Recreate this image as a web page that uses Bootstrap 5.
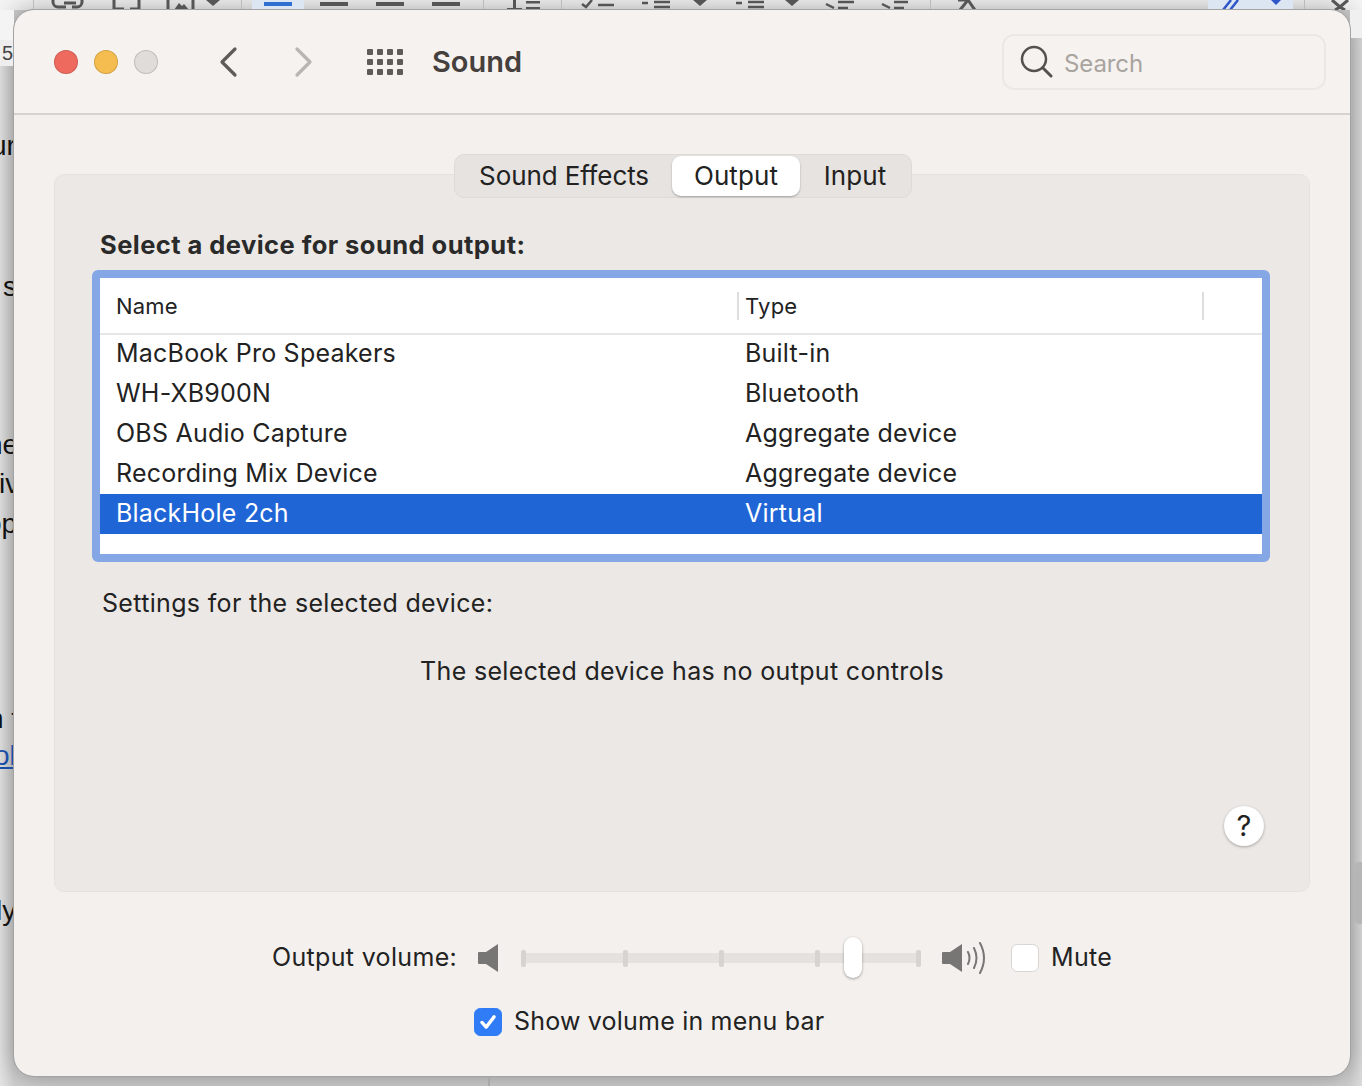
<!doctype html>
<html lang="en"><head><meta charset="utf-8"><title>Sound</title>
<link href="https://cdn.jsdelivr.net/npm/bootstrap@5.3.0/dist/css/bootstrap.min.css" rel="stylesheet">
<style>
html,body{height:1086px;overflow:hidden}
body{width:1362px;position:relative;font-family:Inter,"Liberation Sans",sans-serif;font-size:25px;letter-spacing:.33px;color:#222;background:linear-gradient(90deg,#e4e4e4 0,#cfcfcf 14px,#cfcfcf 1350px,#dcdcdc 1362px)}
.bg-top{height:10px;display:block;background:#f4f4f4}
.bg-frag{position:absolute;font-family:"Liberation Sans",sans-serif;font-size:28px;color:#111;line-height:1;white-space:nowrap;letter-spacing:0}
.bg-num{left:0;top:40px;width:14px;height:26px;background:#eee;font-size:20px;padding:3px 0 0 2px;color:#444}
.bg-sep{position:absolute;left:0;top:10px;width:14px;height:30px;background:#f4f4f4}
.bg-sep-r{position:absolute;right:0;top:10px;width:12px;height:28px;background:#f0f0f0}
.bg-thumb{position:absolute;left:1354px;top:862px;width:8px;height:62px;background:#b6b6b6;border-radius:5px 0 0 5px;z-index:1}
.bg-line{position:absolute;left:488px;top:1076px;width:2px;height:10px;background:#a8a8a8;z-index:1}
.mac-win{position:relative;width:1336px;height:1066px;background:#f3f0ed;border-radius:20px;overflow:hidden;outline:1px solid #a3a3a3}
.win-wrap{width:1336px;height:1066px;margin-left:14px;border-radius:20px;box-shadow:0 0 26px rgba(0,0,0,.34)}
.title-bar{height:105px;background:#f6f2ef;border-bottom:2px solid #d6d3cf;padding:0 24px 0 40px}
.light{width:24px;height:24px;border-radius:50%;border:1px solid rgba(0,0,0,.14)}
.l-red{background:#ee6a5f}.l-yel{background:#f5bd4f}.l-off{background:#dfdcd9}
.lights{gap:16px;margin-right:60px}
.nav-ico{width:22px;height:34px;display:block}
.grid-ico{margin-left:53px}
.nav-next{margin-left:52px}
.title-txt{font-size:29px;font-weight:600;color:#45403d;margin-left:29px;letter-spacing:0}
.search-box{width:324px;height:56px;border:2px solid #ece8e4;border-radius:12px;padding-left:15px;gap:11px;color:#a8a4a0;font-size:24px;letter-spacing:-.1px}
.search-box span{padding-top:4px}
.tab-row{padding-top:39px;padding-left:2px;position:relative;z-index:2}
.seg{height:44px;background:#e6e3e0;border:1px solid #dedbd7;border-radius:10px;padding:1px;width:458px}
.seg-item{height:40px;font-size:26px;line-height:39px;text-align:center;color:#222;border-radius:9px;letter-spacing:.1px}
.seg-a{width:216px;letter-spacing:-.12px}.seg-b{width:128px;background:#fff;box-shadow:0 1px 2px rgba(0,0,0,.3)}.seg-c{flex:1}
.pane{margin:-24px 40px 0;height:718px;background:#ebe8e5;border:1px solid #e6e3df;border-radius:10px;padding:54px 37px 0;position:relative}
.pane-h{font-size:25.5px;font-weight:700;line-height:32px;margin:0 0 9px 8px;color:#2a2a2a;letter-spacing:.45px}
.dev-box{height:292px;border:8px solid #86a7e5;border-radius:6px;background:#fff;overflow:hidden;margin-right:2px}
.dev-box .table{table-layout:fixed;margin:0;width:100%;--bs-table-bg:transparent;font-size:25px;color:#222;letter-spacing:.22px}
.dev-box th,.dev-box td{border:0;padding:0 0 2px;height:40px;vertical-align:middle;font-weight:400;line-height:1;white-space:nowrap;background:transparent;color:inherit;box-shadow:none}
.dev-box thead th{height:56px;font-size:22px;padding-bottom:0;border-bottom:2px solid #e6e6e6;position:relative}
.c1{padding-left:16px!important;width:638px}
.c2{padding-left:7px!important;width:465px}
.col-sep::before{content:"";position:absolute;left:-1px;top:14px;height:28px;width:2px;background:#dedede}
.dev-box tr.sel td{background:#2065d6;color:#fff}
.set-lbl{margin:25px 0 0 10px;line-height:32px}
.no-ctl{margin-top:36px;line-height:32px;text-align:center}
.help-btn{position:absolute;right:45px;bottom:45px;width:40px;height:40px;border-radius:50%;background:#fff;border:0;box-shadow:0 1px 3px rgba(0,0,0,.3);font-size:29px;font-weight:400;line-height:40px;padding:0;color:#222;letter-spacing:0}
.vol-row{height:44px;margin-top:44px;padding-left:258px}
.spk-s{margin-left:21px}
.slider{width:400px;margin:0 21px 0 21px;position:relative;height:20px}
.tick{width:5px;height:17px;border-radius:2px;background:#d6d3d0;flex:none}
.track{height:10px;background:#e4e1de}
.tr1{width:97px}.tr2{width:91px}.tr3{width:91px}.tr4{width:96px}
.thumb{position:absolute;left:323px;top:-11px;width:18px;height:41px;border-radius:9px;background:#fff;box-shadow:0 1px 3px rgba(0,0,0,.35)}
.mac-check{width:28px;height:28px;margin:0;border-radius:6px;border:1px solid #d8d5d2;background-color:#fff;float:none;flex:none}
.mac-check:checked{background-color:#2f7cf6;border-color:#2f7cf6;background-size:100%;background-image:url("data:image/svg+xml,%3csvg xmlns='http://www.w3.org/2000/svg' viewBox='0 0 28 28'%3e%3cpath fill='none' stroke='%23fff' stroke-width='3.6' stroke-linecap='round' stroke-linejoin='round' d='M7.500 14.500l4.500 5L20.500 8.500'/%3e%3c/svg%3e")}
.mute-chk{margin:0 12px 0 23px}
.show-row{margin-top:20px;height:44px;padding-left:460px;gap:12px;letter-spacing:.2px}
.form-check-input:focus{box-shadow:none;border-color:#d8d5d2}
</style></head>
<body>
<svg class="bg-top" width="1362" height="10" viewBox="0 0 1362 10" aria-hidden="true">
<g fill="none" stroke="#555" stroke-width="3">
<path d="M53 0v2a5 5 0 0 0 5 5h8m6 0h5a5 5 0 0 0 5-5V0M64 3h12"/><path d="M114 0v9h10m6 0h9V0"/><path d="M168 0v10M193 0v10"/>
</g>
<path d="M174 10l5-7 3 3 2-2 5 6z" fill="#555"/>
<path d="M206 0h14l-7 6z" fill="#555"/>
<g fill="#bbb"><rect x="33" width="1" height="10"/><rect x="241" width="1" height="10"/><rect x="483" width="1" height="10"/><rect x="561" width="1" height="10"/><rect x="930" width="1" height="10"/><rect x="1304" width="1" height="10"/></g>
<rect x="252" width="52" height="10" fill="#dce6f3"/><rect x="264" y="2" width="28" height="4" fill="#2f6fd0"/>
<g fill="#555"><rect x="320" y="2" width="28" height="4"/><rect x="376" y="2" width="28" height="4"/><rect x="432" y="2" width="28" height="4"/>
<rect x="507" y="8" width="15" height="2"/><rect x="513" width="3" height="9"/><rect x="526" y="1" width="14" height="2.500"/><rect x="526" y="7" width="14" height="2.500"/></g>
<g fill="none" stroke="#555" stroke-width="2.500">
<path d="M582 4l4 3 6-7"/><path d="M598 5h16"/><path d="M642 3h6M654 2h16M654 7h16"/><path d="M736 3h6M748 2h16M748 7h16"/><path d="M826 4l8 4M838 2h16M838 8h10"/><path d="M882 4l8 4M894 2h14M894 8h10"/>
</g>
<path d="M693 0h14l-7 6zM785 0h14l-7 6z" fill="#555"/>
<path d="M960 10l8-10 7 10M958 0h10" fill="none" stroke="#555" stroke-width="3"/>
<rect x="1208" width="85" height="10" fill="#dce6f3"/>
<path d="M1223 10l8-10M1230 10l8-10" stroke="#2f56c8" stroke-width="2.500" fill="none"/><path d="M1271 0h10l-5 5z" fill="#2f56c8"/>
<path d="M1332 0l8 7 8-7M1340 7l-5 3M1340 7l5 3" fill="none" stroke="#555" stroke-width="3"/>
</svg>
<div class="bg-sep"></div><div class="bg-sep-r"></div>
<div class="bg-frag bg-num">5</div>
<div class="bg-frag" style="left:-9px;top:132px">ur</div>
<div class="bg-frag" style="left:3px;top:273px">s</div>
<div class="bg-frag" style="left:-13px;top:431px">he</div>
<div class="bg-frag" style="left:-1px;top:470px">iv</div>
<div class="bg-frag" style="left:-14px;top:510px">op</div>
<div class="bg-frag" style="left:-12px;top:705px">n f</div>
<div class="bg-frag text-decoration-underline" style="left:-6px;top:742px;color:#1a4fa8">ol</div>
<div class="bg-frag" style="left:-4px;top:897px">ly</div>
<div class="bg-thumb"></div><div class="bg-line"></div>

<div class="win-wrap">
<main class="mac-win">
<header class="title-bar d-flex align-items-center">
  <div class="lights d-flex"><span class="light l-red"></span><span class="light l-yel"></span><span class="light l-off"></span></div>
  <svg class="nav-ico" viewBox="0 0 22 34" fill="none" stroke="#5f5b58" stroke-width="3.200" stroke-linecap="round" stroke-linejoin="round"><path d="M17 4L4 17l13 13"/></svg>
  <svg class="nav-ico nav-next" viewBox="0 0 22 34" fill="none" stroke="#b9b5b1" stroke-width="3.200" stroke-linecap="round" stroke-linejoin="round"><path d="M5 4l13 13L5 30"/></svg>
  <svg class="grid-ico" width="36" height="26" viewBox="0 0 36 26" fill="#5f5b58" aria-hidden="true">
    <rect x="0" y="0" width="6" height="6" rx="1"/><rect x="10" y="0" width="6" height="6" rx="1"/><rect x="20" y="0" width="6" height="6" rx="1"/><rect x="30" y="0" width="6" height="6" rx="1"/>
    <rect x="0" y="10" width="6" height="6" rx="1"/><rect x="10" y="10" width="6" height="6" rx="1"/><rect x="20" y="10" width="6" height="6" rx="1"/><rect x="30" y="10" width="6" height="6" rx="1"/>
    <rect x="0" y="20" width="6" height="6" rx="1"/><rect x="10" y="20" width="6" height="6" rx="1"/><rect x="20" y="20" width="6" height="6" rx="1"/><rect x="30" y="20" width="6" height="6" rx="1"/>
  </svg>
  <span class="title-txt">Sound</span>
  <div class="search-box d-flex align-items-center ms-auto">
    <svg width="34" height="34" viewBox="0 0 34 34" fill="none" stroke="#55514e" stroke-width="2.500" stroke-linecap="round"><circle cx="15" cy="14" r="12"/><path d="M24 23l8 8" stroke-width="3"/></svg>
    <span>Search</span>
  </div>
</header>
<div class="tab-row d-flex justify-content-center">
  <div class="seg d-flex">
    <div class="seg-item seg-a">Sound Effects</div>
    <div class="seg-item seg-b">Output</div>
    <div class="seg-item seg-c">Input</div>
  </div>
</div>
<section class="pane">
  <h2 class="pane-h">Select a device for sound output:</h2>
  <div class="dev-box">
    <table class="table">
      <thead><tr><th class="c1">Name</th><th class="c2 col-sep">Type</th><th class="col-sep"></th></tr></thead>
      <tbody>
        <tr><td class="c1">MacBook Pro Speakers</td><td class="c2">Built-in</td><td></td></tr>
        <tr><td class="c1">WH-XB900N</td><td class="c2">Bluetooth</td><td></td></tr>
        <tr><td class="c1">OBS Audio Capture</td><td class="c2">Aggregate device</td><td></td></tr>
        <tr><td class="c1">Recording Mix Device</td><td class="c2">Aggregate device</td><td></td></tr>
        <tr class="sel"><td class="c1">BlackHole 2ch</td><td class="c2">Virtual</td><td></td></tr>
      </tbody>
    </table>
  </div>
  <p class="set-lbl mb-0">Settings for the selected device:</p>
  <p class="no-ctl mb-0">The selected device has no output controls</p>
  <button type="button" class="help-btn">?</button>
</section>
<div class="vol-row d-flex align-items-center">
  <span>Output volume:</span>
  <svg class="spk-s" width="22" height="30" viewBox="0 0 22 30" fill="#787674"><path d="M1 9h7L20 1v28L8 21H1a1 1 0 0 1-1-1V10a1 1 0 0 1 1-1z"/></svg>
  <div class="slider d-flex align-items-center">
    <span class="tick"></span><span class="track tr1"></span><span class="tick"></span><span class="track tr2"></span><span class="tick"></span><span class="track tr3"></span><span class="tick"></span><span class="track tr4"></span><span class="tick"></span>
    <span class="thumb"></span>
  </div>
  <svg width="46" height="34" viewBox="0 0 46 34" fill="none" aria-hidden="true"><path d="M1 11h7L20 3v28L8 23H1a1 1 0 0 1-1-1V12a1 1 0 0 1 1-1z" fill="#787674"/><path d="M26 11q3 6 0 12M32 7q5 10 0 20M38 2q8 15 0 30" stroke="#787674" stroke-width="2" stroke-linecap="round"/></svg>
  <input class="form-check-input mac-check mute-chk" type="checkbox" aria-label="Mute">
  <span>Mute</span>
</div>
<div class="show-row d-flex align-items-center">
  <input class="form-check-input mac-check" type="checkbox" checked aria-label="Show volume in menu bar">
  <span>Show volume in menu bar</span>
</div>
</main>
</div>
</body></html>
